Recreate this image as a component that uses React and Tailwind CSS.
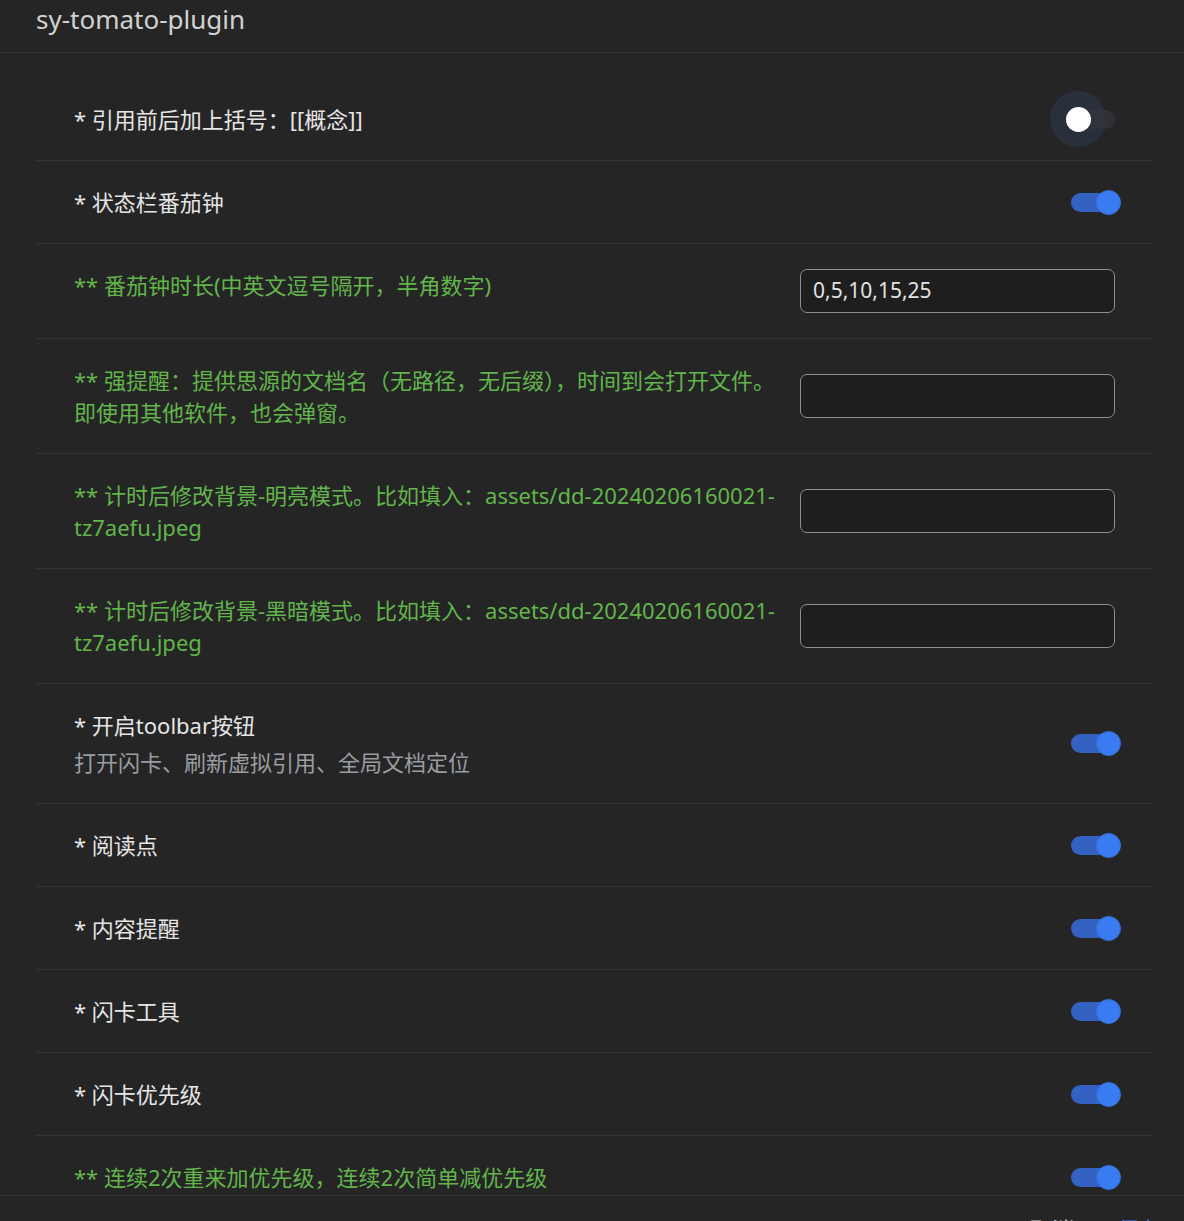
import React from "react";

const FONT = { fontFamily: '"Noto Sans", "Noto Sans CJK SC", sans-serif' };

const rows = [
  { type: "switch", label: "* 引用前后加上括号：[[概念]]", on: false, focus: true },
  { type: "switch", label: "* 状态栏番茄钟", on: true },
  { type: "input", green: true, label: "** 番茄钟时长(中英文逗号隔开，半角数字)", value: "0,5,10,15,25" },
  { type: "input", green: true, label: "** 强提醒：提供思源的文档名（无路径，无后缀），时间到会打开文件。即使用其他软件，也会弹窗。", value: "" },
  { type: "input", green: true, label: "** 计时后修改背景-明亮模式。比如填入：assets/dd-20240206160021-tz7aefu.jpeg", value: "" },
  { type: "input", green: true, label: "** 计时后修改背景-黑暗模式。比如填入：assets/dd-20240206160021-tz7aefu.jpeg", value: "" },
  { type: "switch", label: "* 开启toolbar按钮", desc: "打开闪卡、刷新虚拟引用、全局文档定位", on: true },
  { type: "switch", label: "* 阅读点", on: true },
  { type: "switch", label: "* 内容提醒", on: true },
  { type: "switch", label: "* 闪卡工具", on: true },
  { type: "switch", label: "* 闪卡优先级", on: true },
  { type: "switch", green: true, label: "** 连续2次重来加优先级，连续2次简单减优先级", on: true },
];

function Switch({ on, focus }) {
  return (
    <div className="relative self-center shrink-0 w-[44px] h-[19px]">
      {on ? (
        <>
          <div className="absolute inset-0 rounded-full bg-[#3462c2]" />
          <div className="absolute top-[-3px] right-[-6px] w-[25px] h-[25px] rounded-full bg-[#3a7bf2] border border-[#3470dc]" />
        </>
      ) : (
        <>
          {focus && (
            <div className="absolute left-[-21px] top-[-18.5px] w-[56px] h-[56px] rounded-full bg-[#29303c]" />
          )}
          <div className="absolute inset-0 rounded-full bg-[#333639]/80" />
          <div className="absolute top-[-3px] left-[-5px] w-[25px] h-[25px] rounded-full bg-white" />
        </>
      )}
    </div>
  );
}

function Row({ row }) {
  const labelColor = row.green ? "text-[#62b54b]" : "text-[#e6e6e6]";
  return (
    <div className="flex shrink-0 gap-[10px] pl-[38px] pr-[38px] py-[25px] border-b border-[#343434]">
      <div className="flex-1 min-w-0">
        <div className={`text-[22px] leading-[32px] ${labelColor}`}>{row.label}</div>
        {row.desc && (
          <div className="mt-[5px] text-[22px] leading-[32px] text-[#9a9da2]">{row.desc}</div>
        )}
      </div>
      {row.type === "switch" ? (
        <Switch on={row.on} focus={row.focus} />
      ) : (
        <div className="self-center shrink-0 w-[315px] h-[44px] rounded-[7px] border border-[#8c8f95] bg-[#1e1e1e] flex items-center pl-[12px] text-[21px] text-[#e2e2e2]">
          {row.value}
        </div>
      )}
    </div>
  );
}

export default function App() {
  return (
    <div className="w-full h-[1221px] bg-[#252525] flex flex-col overflow-hidden" style={FONT}>
      <div className="shrink-0 h-[53px] border-b border-[#333333] pl-[36px] pt-[0px]">
        <div className="text-[26px] leading-[38px] text-[#d2d2d2]">sy-tomato-plugin</div>
      </div>
      <div className="flex-1 min-h-0 overflow-hidden pl-[36px] pr-[31px] pt-[25px] flex flex-col">
        {rows.map((r, i) => (
          <Row key={i} row={r} />
        ))}
      </div>
      <div className="shrink-0 h-[26px] border-t border-[#333333] flex justify-end gap-[43px] pr-[23px] pt-[17px] overflow-hidden">
        <div className="text-[22px] leading-[32px] text-[#c8c8c8]">取消</div>
        <div className="text-[22px] leading-[32px] text-[#3b7bf2]">保存</div>
      </div>
    </div>
  );
}
